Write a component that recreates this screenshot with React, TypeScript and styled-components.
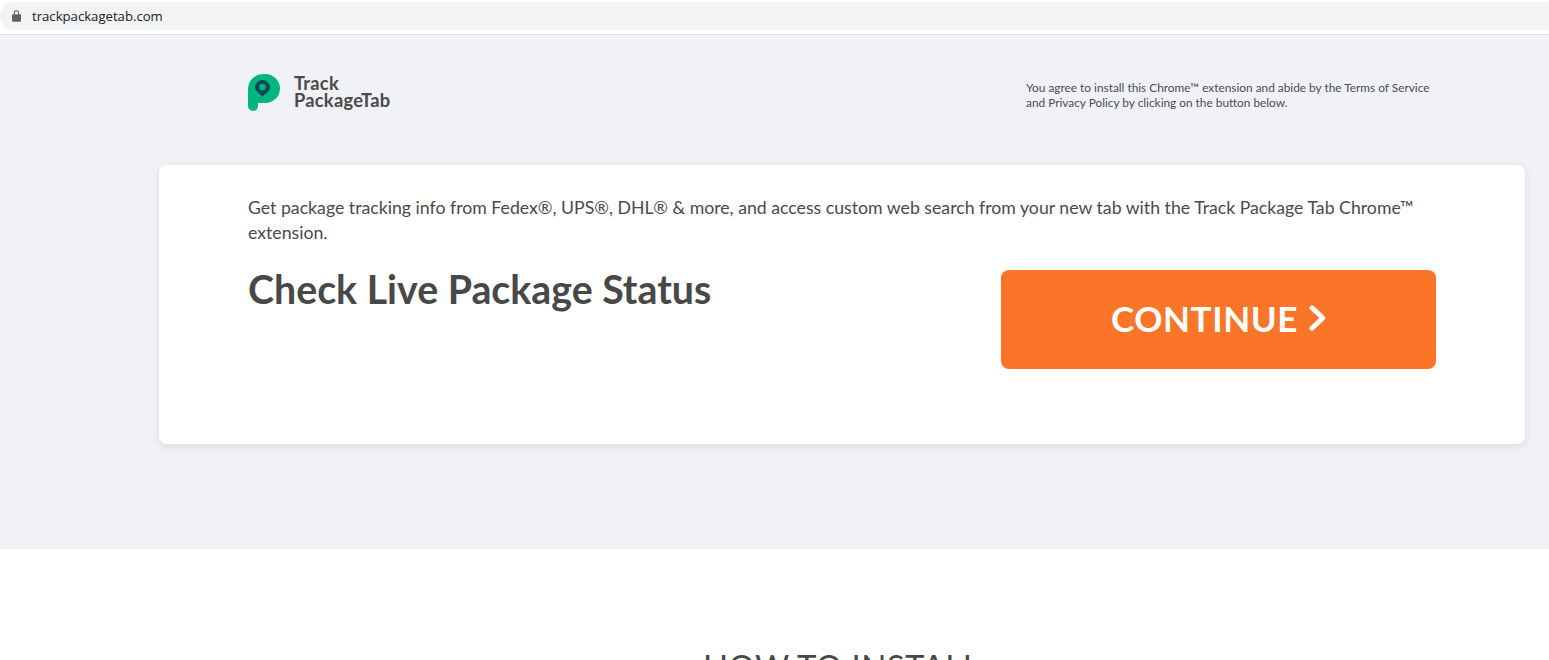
import React from "react";
import styled, { createGlobalStyle } from "styled-components";

const Global = createGlobalStyle`
  html, body { margin: 0; padding: 0; background: #fff; height: 660px; overflow: hidden; }
  * { box-sizing: border-box; }
`;
const Page = styled.div`
  width: 1549px;
  height: 660px;
  overflow: hidden;
  font-family: Lato, "Open Sans", sans-serif;
  color: #484848;
`;
const BrowserBar = styled.div`
  height: 35px;
  padding-top: 2px;
  background: #fff;
  border-bottom: 1px solid #dcdcdc;
`;
const AddressPill = styled.div`
  height: 28px;
  display: flex;
  align-items: center;
  gap: 11px;
  padding-left: 12px;
  background: #f1f3f4;
  border-radius: 14px 0 0 14px;
`;
const Url = styled.span`
  font-family: "Open Sans", sans-serif;
  font-size: 13.15px;
  color: #202124;
`;
const Hero = styled.section`
  height: 514px;
  background: #f0f2f7;
  padding: 38px 24px 0 159px;
`;
const HeroHeader = styled.header`
  display: flex;
  justify-content: space-between;
  height: 92px;
  padding: 1px 83px 0 89px;
`;
const Brand = styled.div`
  display: flex;
  gap: 14px;
  align-items: flex-start;
`;
const BrandName = styled.div`
  font-size: 18.3px;
  line-height: 17px;
  font-weight: 700;
  color: #4a4a4a;
  padding-top: 1px;
  letter-spacing: 0.25px;
`;
const Legal = styled.p`
  margin: 6px 0 0;
  width: 416px;
  font-size: 11.85px;
  line-height: 15px;
  color: #4b4b55;
`;
const Card = styled.div`
  height: 279px;
  background: #fff;
  border-radius: 8px;
  box-shadow: 0 2px 8px rgba(60, 64, 90, 0.12);
  padding: 30px 89px 0;
`;
const Intro = styled.p`
  margin: 0;
  font-size: 17.7px;
  line-height: 25px;
  color: #4a4a4a;
`;
const CardRow = styled.div`
  display: flex;
  justify-content: space-between;
  align-items: flex-start;
  margin-top: 25px;
`;
const Title = styled.h1`
  margin: -5px 0 0;
  font-size: 39.3px;
  line-height: 48px;
  font-weight: 700;
  color: #484848;
`;
const Cta = styled.button`
  width: 435px;
  height: 99px;
  border: none;
  border-radius: 8px;
  background: #fa7528;
  color: #fff;
  font-family: Lato, sans-serif;
  font-size: 35px;
  font-weight: 700;
  letter-spacing: 0.6px;
  display: flex;
  align-items: center;
  justify-content: center;
  gap: 11px;
  padding: 0 0 3px;
`;
const Lower = styled.section`
  padding: 97px 0 0 134px;
  text-align: center;
`;
const LowerTitle = styled.h2`
  margin: 0;
  font-size: 33px;
  line-height: 40px;
  font-weight: 400;
  color: #484848;
  letter-spacing: 0.4px;
`;

const LockIcon = () => (
  <svg width="9" height="12" viewBox="0 0 10 13" aria-hidden="true">
    <path
      fill="#5f6368"
      d="M5 0a3 3 0 0 0-3 3v1.5H1.2A1.2 1.2 0 0 0 0 5.7v6.1A1.2 1.2 0 0 0 1.2 13h7.6a1.2 1.2 0 0 0 1.2-1.2V5.7a1.2 1.2 0 0 0-1.2-1.2H8V3a3 3 0 0 0-3-3Zm-1.8 4.5V3a1.8 1.8 0 0 1 3.6 0v1.5H3.2Z"
    />
  </svg>
);

const LogoMark = () => (
  <svg width="32" height="37" viewBox="0 0 32 37" aria-hidden="true">
    <path
      fill="#00b67f"
      d="M15 0H17A15 14.5 0 0 1 17 29H10V32A5 5 0 0 1 0 32V15A15 15 0 0 1 15 0Z"
    />
    <path
      fill="#0e4a56"
      d="M14.5 6A7.5 7.5 0 0 1 22 13.5C22 16.5 18.5 19 14.5 22.5 10.5 19 7 16.5 7 13.5A7.5 7.5 0 0 1 14.5 6Z"
    />
    <circle cx="14.5" cy="13" r="3.2" fill="#00b67f" />
  </svg>
);

const Chevron = () => (
  <svg width="17" height="26" viewBox="0 0 17 26" aria-hidden="true">
    <path
      d="M3 2.8L13.8 13 3 23.2"
      fill="none"
      stroke="#fff"
      strokeWidth="5"
      strokeLinecap="round"
      strokeLinejoin="round"
    />
  </svg>
);

export default function App() {
  return (
    <Page>
      <Global />
      <BrowserBar>
        <AddressPill>
          <LockIcon />
          <Url>trackpackagetab.com</Url>
        </AddressPill>
      </BrowserBar>
      <Hero>
        <HeroHeader>
          <Brand>
            <LogoMark />
            <BrandName>
              Track
              <br />
              PackageTab
            </BrandName>
          </Brand>
          <Legal>
            You agree to install this Chrome™ extension and abide by the Terms of Service and Privacy Policy by
            clicking on the button below.
          </Legal>
        </HeroHeader>
        <Card>
          <Intro>
            Get package tracking info from Fedex®, UPS®, DHL® &amp; more, and access custom web search from your new
            tab with the Track Package Tab Chrome™ extension.
          </Intro>
          <CardRow>
            <Title>Check Live Package Status</Title>
            <Cta>
              CONTINUE
              <Chevron />
            </Cta>
          </CardRow>
        </Card>
      </Hero>
      <Lower>
        <LowerTitle>HOW TO INSTALL</LowerTitle>
      </Lower>
    </Page>
  );
}
